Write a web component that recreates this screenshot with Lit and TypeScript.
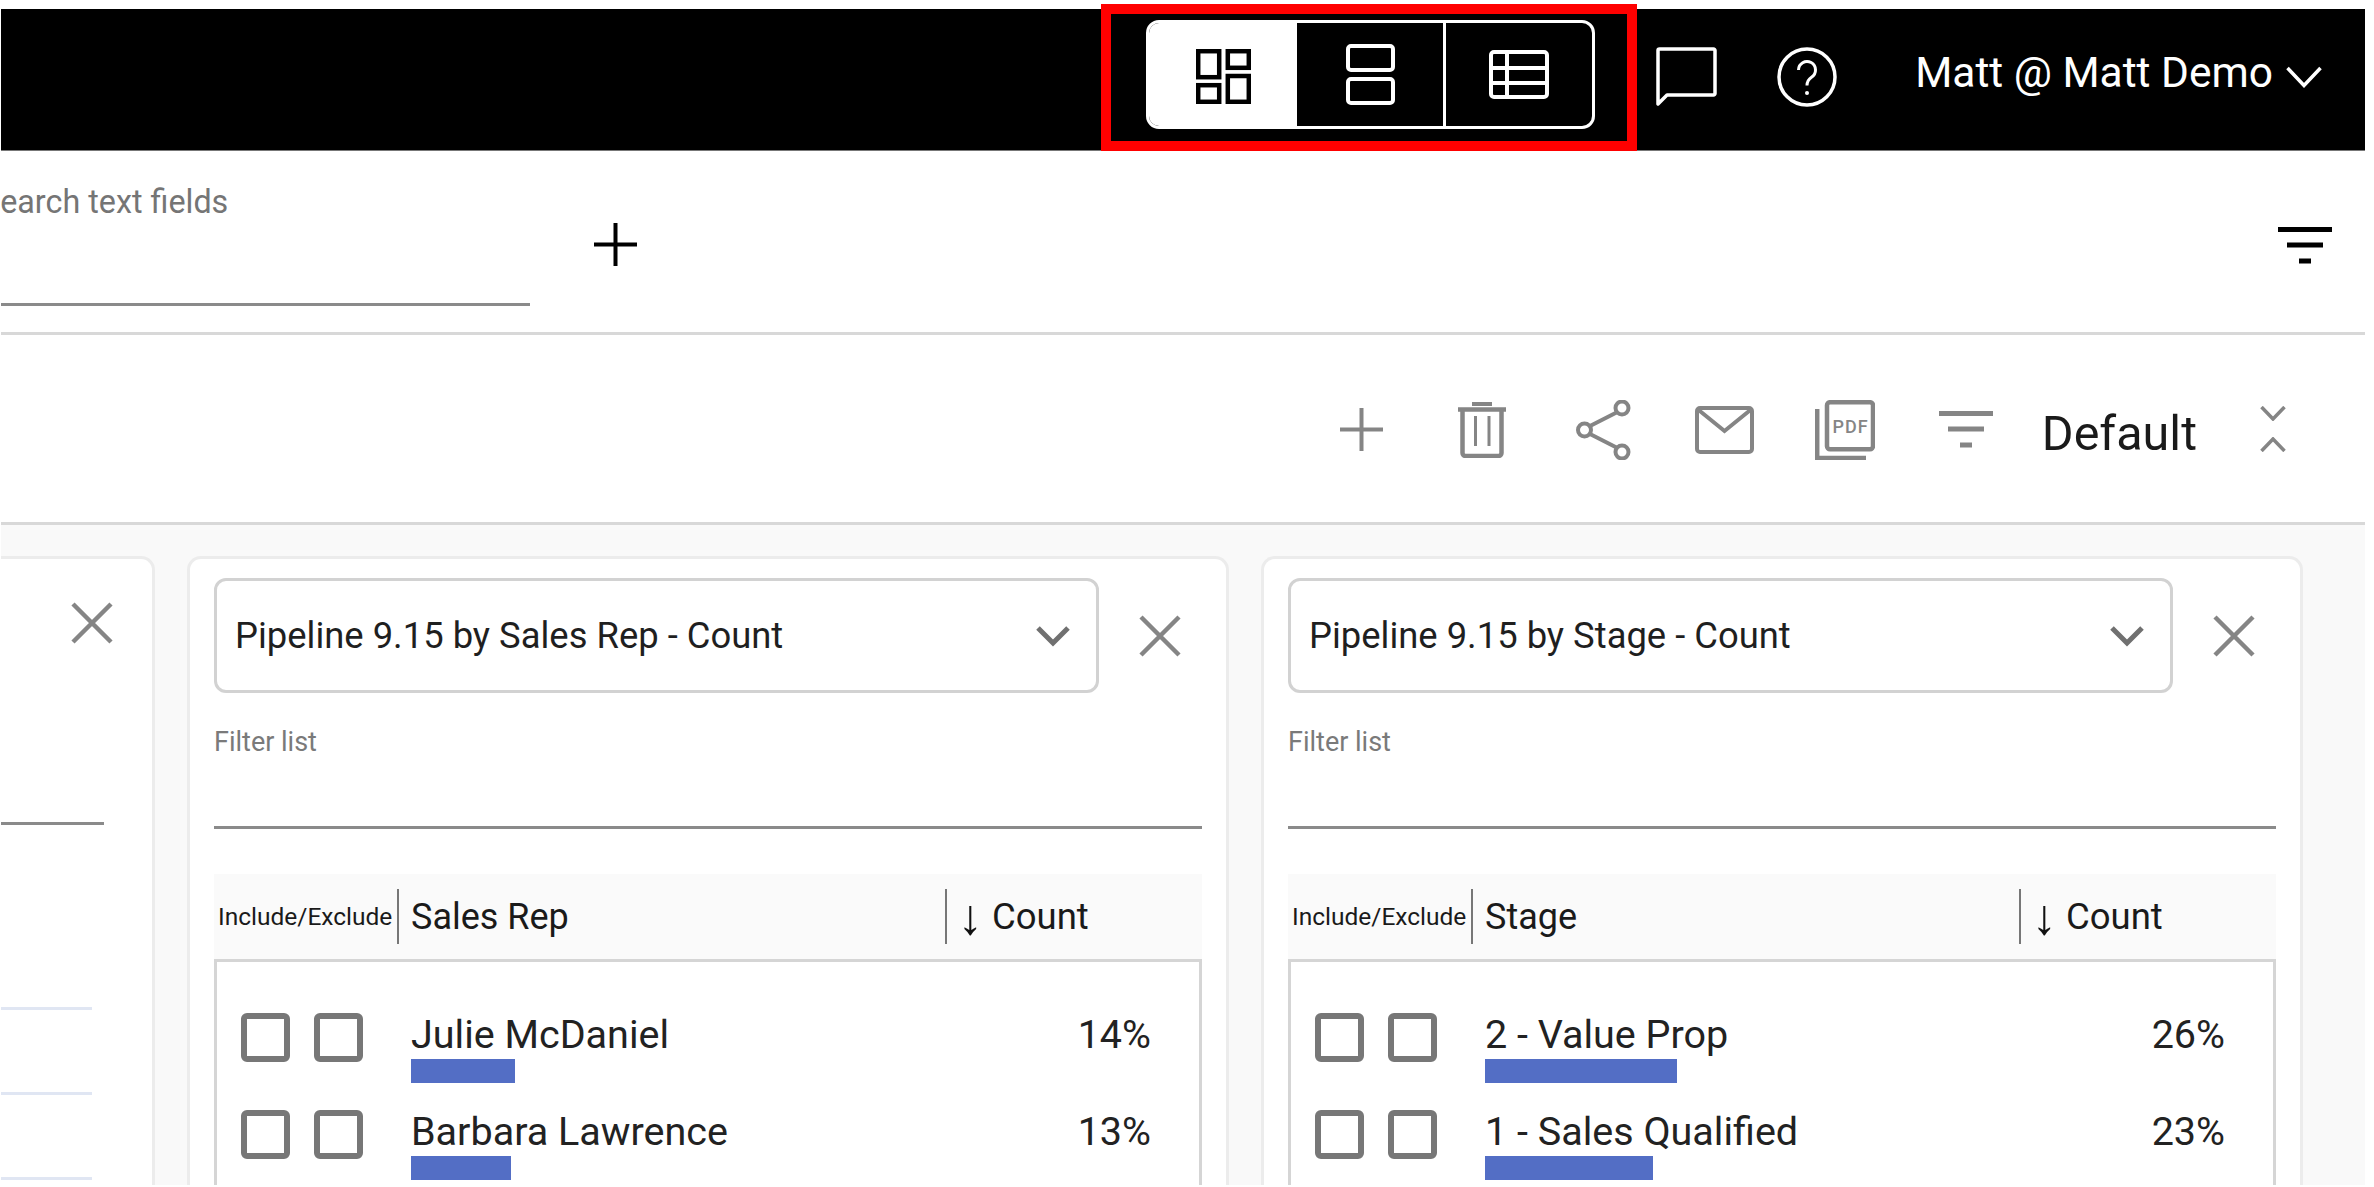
import { LitElement, html, css } from "lit";
import { customElement } from "lit/decorators.js";

const cards = [
  {
    title: "Pipeline 9.15 by Sales Rep - Count",
    column: "Sales Rep",
    rows: [
      { name: "Julie McDaniel", pct: "14%", bar: 104 },
      { name: "Barbara Lawrence", pct: "13%", bar: 100 },
    ],
  },
  {
    title: "Pipeline 9.15 by Stage - Count",
    column: "Stage",
    rows: [
      { name: "2 - Value Prop", pct: "26%", bar: 192 },
      { name: "1 - Sales Qualified", pct: "23%", bar: 168 },
    ],
  },
];

const closeIcon = html`<svg class="x" width="42" height="42" viewBox="0 0 42 42">
  <path d="M2 2 L40 40 M40 2 L2 40" fill="none" stroke="#858585" stroke-width="4.5" />
</svg>`;

const filterIcon = (stroke: string, w: number) => html`<svg width=${w} height="37" viewBox="0 0 54 37">
  <path d="M0 2.5H54 M9 18H45 M21 34H33" fill="none" stroke=${stroke} stroke-width="5" />
</svg>`;

@customElement("app-root")
export class AppRoot extends LitElement {
  static styles = css`
    :host {
      display: block;
      position: relative;
      width: 2374px;
      height: 1187px;
      overflow: hidden;
      background: #fff;
      font-family: Roboto, "Liberation Sans", sans-serif;
      color: #1f1f1f;
    }
    .frame {
      box-sizing: border-box;
      height: 1187px;
      padding: 9px 9px 2px 1px;
      display: flex;
      flex-direction: column;
    }
    .frame-inner {
      flex: 1;
      min-height: 0;
      overflow: hidden;
      display: flex;
      flex-direction: column;
    }
    svg { display: block; flex: none; }

    .topbar {
      flex: none;
      box-sizing: border-box;
      height: 142px;
      background: #000;
      border-bottom: 1px solid #777;
      display: flex;
      align-items: center;
      justify-content: flex-end;
      padding: 0 43px 6px 0;
      color: #fff;
    }
    .seg {
      box-sizing: border-box;
      width: 449px;
      height: 109px;
      border: 3px solid #fff;
      border-radius: 13px;
      display: flex;
      overflow: hidden;
      margin: 0 61px 5px 0;
    }
    .seg-item {
      flex: 1;
      display: flex;
      align-items: center;
      justify-content: center;
    }
    .seg-item.on { background: #fff; flex: none; width: 148px; padding-top: 5px; box-sizing: border-box; }
    .seg-item.second { border-right: 3px solid #fff; }
    .chat { margin-right: 60px; }
    .help { margin-right: 78px; }
    .user {
      font-size: 42.5px;
      line-height: 60px;
      white-space: nowrap;
      margin-bottom: 8px;
    }
    .caret { margin-left: 13px; }

    .searchbar {
      flex: none;
      box-sizing: border-box;
      height: 184px;
      border-bottom: 3px solid #d8d8d8;
      display: flex;
      align-items: flex-start;
      padding-right: 33px;
    }
    .search {
      width: 529px;
      height: 152px;
      border-bottom: 3px solid #8a8a8a;
      box-sizing: content-box;
      overflow: hidden;
    }
    .search-label {
      font-size: 32.3px;
      line-height: 36px;
      color: #757575;
      margin: 33px 0 0 -20px;
      white-space: nowrap;
    }
    .add { margin: 72px 0 0 64px; }
    .spacer { flex: 1; }
    .filter-top { margin-top: 76px; }

    .toolbar {
      flex: none;
      box-sizing: border-box;
      height: 190px;
      border-bottom: 3px solid #d8d8d8;
      display: flex;
      align-items: center;
      justify-content: flex-end;
      padding: 2px 79px 0 0;
    }
    .tool {
      width: 121px;
      display: flex;
      justify-content: center;
      align-items: center;
    }
    .view-name {
      font-size: 48.5px;
      line-height: 60px;
      margin: 9px 63px 0 15px;
      color: #1a1a1a;
    }
    .expand {
      display: flex;
      flex-direction: column;
      gap: 16px;
      margin-bottom: 2px;
    }

    .board {
      flex: 1;
      min-height: 0;
      background: #f9f9f9;
      display: flex;
      gap: 32px;
      padding-top: 31px;
      overflow: hidden;
    }
    .card {
      flex: none;
      box-sizing: border-box;
      width: 1042px;
      background: #fff;
      border: 3px solid #ececec;
      border-bottom: none;
      border-radius: 14px 14px 0 0;
      padding: 19px 24px 0;
    }
    .card.clipped {
      width: 154px;
      border-left: none;
      border-top-left-radius: 0;
      padding: 43px 0 0;
    }
    .clipped .x { margin-left: 70px; }
    .clipped-field {
      width: 103px;
      height: 3px;
      background: #8a8a8a;
      margin-top: 178px;
    }
    .clipped-rule {
      width: 91px;
      height: 3px;
      background: #e0e6f3;
      margin-top: 82px;
    }
    .clipped-rule.first { margin-top: 182px; }

    .select-row {
      display: flex;
      align-items: center;
    }
    .select {
      box-sizing: border-box;
      width: 885px;
      height: 115px;
      border: 3px solid #d2d2d2;
      border-radius: 12px;
      display: flex;
      align-items: center;
      justify-content: space-between;
      padding: 0 26px 0 18px;
      font-size: 36.4px;
    }
    .select-row .x { margin-left: 40px; }
    .filter {
      box-sizing: border-box;
      height: 136px;
      border-bottom: 3px solid #8a8a8a;
      padding-top: 33px;
      font-size: 27px;
      line-height: 32px;
      color: #7a7a7a;
    }
    .head {
      box-sizing: border-box;
      height: 88px;
      margin-top: 45px;
      background: #fafafa;
      border-bottom: 3px solid #d5d5d5;
      display: flex;
      align-items: center;
      font-size: 36px;
      color: #1a1a1a;
    }
    .head-ie {
      box-sizing: border-box;
      width: 183px;
      padding-left: 4px;
      font-size: 24.5px;
      white-space: nowrap;
    }
    .sep {
      flex: none;
      width: 2px;
      height: 55px;
      background: #777;
    }
    .head-name {
      box-sizing: border-box;
      width: 546px;
      padding-left: 12px;
    }
    .head-count { padding-left: 11px; white-space: nowrap; font-size: 36.5px; display: flex; align-items: center; gap: 9px; }
    .arrow { font-size: 50px; line-height: 40px; color: #111; }
    .list {
      border-left: 3px solid #d5d5d5;
      border-right: 3px solid #d5d5d5;
      padding: 49px 48px 0 24px;
      height: 400px;
    }
    .row {
      height: 97px;
      display: flex;
      align-items: flex-start;
    }
    .check {
      flex: none;
      box-sizing: border-box;
      width: 49px;
      height: 49px;
      border: 6px solid #777;
      border-radius: 6px;
      margin: 2px 24px 0 0;
    }
    .row-main { flex: 1; padding-left: 24px; }
    .row-name, .row-pct {
      font-size: 39.5px;
      line-height: 46px;
      color: #222;
      white-space: nowrap;
      padding-top: 1px;
    }
    .bar {
      height: 24px;
      margin-top: 1px;
      background: #536ec5;
    }
    .annotation {
      position: absolute;
      left: 1101px;
      top: 4px;
      box-sizing: border-box;
      width: 536px;
      height: 147px;
      border: 10px solid #f00;
      pointer-events: none;
    }
  `;

  private renderCard(c: (typeof cards)[number]) {
    return html`<section class="card">
      <div class="select-row">
        <div class="select">
          <span>${c.title}</span>
          <svg width="34" height="22" viewBox="0 0 34 22">
            <path d="M2 3 L17 18 L32 3" fill="none" stroke="#707070" stroke-width="5" />
          </svg>
        </div>
        ${closeIcon}
      </div>
      <div class="filter">Filter list</div>
      <div class="head">
        <div class="head-ie">Include/Exclude</div>
        <div class="sep"></div>
        <div class="head-name">${c.column}</div>
        <div class="sep"></div>
        <div class="head-count"><span class="arrow">↓</span><span>Count</span></div>
      </div>
      <div class="list">
        ${c.rows.map(
          (r) => html`<div class="row">
            <div class="check"></div>
            <div class="check"></div>
            <div class="row-main">
              <div class="row-name">${r.name}</div>
              <div class="bar" style="width:${r.bar}px"></div>
            </div>
            <div class="row-pct">${r.pct}</div>
          </div>`
        )}
      </div>
    </section>`;
  }

  render() {
    return html`<div class="frame">
        <div class="frame-inner">
          <header class="topbar">
            <div class="seg">
              <div class="seg-item on">
                <svg width="55" height="55" viewBox="0 0 55 55" fill="none" stroke="#000" stroke-width="4.5">
                  <rect x="2.2" y="2.2" width="21" height="26" />
                  <rect x="31.8" y="2.2" width="21" height="16.6" />
                  <rect x="2.2" y="36.2" width="21" height="16.6" />
                  <rect x="31.8" y="27" width="21" height="25.8" />
                </svg>
              </div>
              <div class="seg-item second">
                <svg width="49" height="61" viewBox="0 0 49 61" fill="none" stroke="#fff" stroke-width="4">
                  <rect x="2" y="2" width="45" height="24" rx="3" />
                  <rect x="2" y="35" width="45" height="24" rx="3" />
                </svg>
              </div>
              <div class="seg-item">
                <svg width="60" height="49" viewBox="0 0 60 49" fill="none" stroke="#fff" stroke-width="4">
                  <rect x="2" y="2" width="56" height="45" rx="3" />
                  <path d="M18 2V47 M2 18H58 M2 33H58" />
                </svg>
              </div>
            </div>
            <svg class="chat" width="61" height="60" viewBox="0 0 61 60" fill="none" stroke="#fff" stroke-width="3.5" stroke-linejoin="round">
              <path d="M2 3.5 a1.5 1.5 0 0 1 1.5 -1.5 H57.5 a1.5 1.5 0 0 1 1.5 1.5 V46.5 a1.5 1.5 0 0 1 -1.5 1.5 H11 L2 57 Z" />
            </svg>
            <svg class="help" width="60" height="60" viewBox="0 0 60 60" fill="none" stroke="#fff" stroke-width="3.5">
              <circle cx="30" cy="30" r="28" />
              <path d="M21.5 23 a8.5 8.5 0 1 1 13 7.2 c-3 2 -4.5 3.8 -4.5 8.3" stroke-width="3" />
              <circle cx="30" cy="46" r="2" fill="#fff" stroke="none" />
            </svg>
            <div class="user">Matt @ Matt Demo</div>
            <svg class="caret" width="36" height="22" viewBox="0 0 36 22">
              <path d="M1.5 2 L18 19.5 L34.5 2" fill="none" stroke="#fff" stroke-width="3.5" />
            </svg>
          </header>

          <div class="searchbar">
            <div class="search"><div class="search-label">Search text fields</div></div>
            <svg class="add" width="43" height="43" viewBox="0 0 43 43">
              <path d="M21.5 0V43 M0 21.5H43" fill="none" stroke="#000" stroke-width="4" />
            </svg>
            <div class="spacer"></div>
            <div class="filter-top">${filterIcon("#000", 54)}</div>
          </div>

          <div class="toolbar">
            <div class="tool">
              <svg width="43" height="43" viewBox="0 0 43 43">
                <path d="M21.5 0V43 M0 21.5H43" fill="none" stroke="#858585" stroke-width="4" />
              </svg>
            </div>
            <div class="tool">
              <svg width="48" height="56" viewBox="0 0 48 56" fill="none" stroke="#858585">
                <path d="M0 7.5H48" stroke-width="4.5" />
                <path d="M14 2H34" stroke-width="4" />
                <path d="M4.5 8V51 a3 3 0 0 0 3 3 H40.5 a3 3 0 0 0 3 -3 V8" stroke-width="4.5" />
                <path d="M17.5 14V44 M31 14V44" stroke-width="3" />
              </svg>
            </div>
            <div class="tool">
              <svg width="55" height="60" viewBox="0 0 55 60" fill="none" stroke="#858585" stroke-width="4">
                <circle cx="46" cy="8" r="6.5" />
                <circle cx="8.5" cy="30" r="6.5" />
                <circle cx="46" cy="52" r="6.5" />
                <path d="M40.5 12.5 L14 26 M14 34 L40.5 47.5" />
              </svg>
            </div>
            <div class="tool">
              <svg width="59" height="48" viewBox="0 0 59 48" fill="none" stroke="#858585" stroke-width="4">
                <rect x="2" y="2" width="55" height="44" rx="3" />
                <path d="M3 3.5 L29.5 25 L56 3.5" />
              </svg>
            </div>
            <div class="tool">
              <svg width="60" height="60" viewBox="0 0 60 60" fill="none" stroke="#858585" stroke-width="4.5">
                <rect x="12" y="2.2" width="46" height="47" rx="3" />
                <path d="M2.2 9V58 H51" />
                <text x="35.5" y="33" text-anchor="middle" fill="#858585" stroke="none" font-family="Roboto" font-weight="500" font-size="18" letter-spacing="1">PDF</text>
              </svg>
            </div>
            <div class="tool">${filterIcon("#858585", 54)}</div>
            <div class="view-name">Default</div>
            <div class="expand">
              <svg width="26" height="15" viewBox="0 0 26 15">
                <path d="M1.5 1 L13 13 L24.5 1" fill="none" stroke="#858585" stroke-width="3.5" />
              </svg>
              <svg width="26" height="15" viewBox="0 0 26 15">
                <path d="M1.5 14 L13 2 L24.5 14" fill="none" stroke="#858585" stroke-width="3.5" />
              </svg>
            </div>
          </div>

          <div class="board">
            <section class="card clipped">
              ${closeIcon}
              <div class="clipped-field"></div>
              <div class="clipped-rule first"></div>
              <div class="clipped-rule"></div>
              <div class="clipped-rule"></div>
            </section>
            ${cards.map((c) => this.renderCard(c))}
          </div>
        </div>
      </div>
      <div class="annotation"></div>`;
  }
}
